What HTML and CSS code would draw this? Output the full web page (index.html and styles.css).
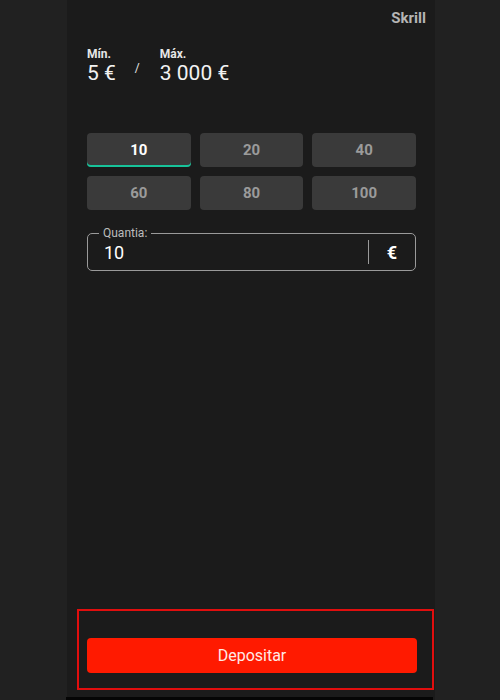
FILE: index.html
```html
<!DOCTYPE html>
<html lang="pt">
<head>
  <meta charset="UTF-8">
  <meta name="viewport" content="width=device-width, initial-scale=1.0">
  <title>Depositar - Skrill</title>
  <link rel="stylesheet" href="styles.css">
</head>
<body>
  <main class="panel">
    <div class="method">Skrill</div>

    <div class="limits">
      <div class="limit">
        <span class="limit-label">Mín.</span>
        <span class="limit-value">5 €</span>
      </div>
      <span class="limit-sep">/</span>
      <div class="limit">
        <span class="limit-label">Máx.</span>
        <span class="limit-value">3 000 €</span>
      </div>
    </div>

    <div class="amounts">
      <button class="amount active">10</button>
      <button class="amount">20</button>
      <button class="amount">40</button>
      <button class="amount">60</button>
      <button class="amount">80</button>
      <button class="amount">100</button>
    </div>

    <div class="field">
      <label class="field-label" for="amountInput">Quantia:</label>
      <input type="text" id="amountInput" class="field-input" value="10">
      <span class="field-divider"></span>
      <span class="field-currency">€</span>
    </div>

    <div class="actions">
      <button class="deposit">Depositar</button>
    </div>

    <div class="panel-edge"></div>
  </main>
</body>
</html>
```

FILE: styles.css
```css
body {
  margin: 0;
  background: #212121;
  font-family: Roboto, "Liberation Sans", Arial, sans-serif;
  color: #ffffff;
}

.panel {
  box-sizing: border-box;
  width: 368px;
  height: 700px;
  margin-left: 67px;
  padding: 0 19px 0 20px;
  background: #1b1b1b;
  display: flex;
  flex-direction: column;
}

.method {
  align-self: flex-end;
  margin-top: 9px;
  margin-right: -10px;
  font-size: 15px;
  line-height: 18px;
  font-weight: 700;
  color: #b5b5b5;
}

.limits {
  display: flex;
  align-items: flex-start;
  margin-top: 20px;
}

.limit {
  display: flex;
  flex-direction: column;
}

.limit-label {
  font-size: 12px;
  line-height: 14px;
  font-weight: 700;
  color: #e6e6e6;
}

.limit-value {
  font-size: 21px;
  line-height: 24px;
  color: #f2f2f2;
}

.limit-sep {
  margin: 14px 20px 0 19px;
  font-size: 12px;
  line-height: 14px;
  color: #e6e6e6;
}

.amounts {
  display: grid;
  grid-template-columns: repeat(3, 1fr);
  gap: 9px;
  margin-top: 48px;
}

.amount {
  height: 34px;
  border: none;
  border-radius: 4px;
  background: #3a3a3a;
  color: #9b9b9b;
  font-family: inherit;
  font-size: 15px;
  font-weight: 700;
  cursor: pointer;
}

.amount.active {
  color: #ffffff;
  box-shadow: inset 0 -2px 0 #17c39a;
}

.field {
  position: relative;
  display: flex;
  align-items: center;
  box-sizing: border-box;
  height: 38px;
  margin-top: 23px;
  padding: 0 18px 0 16px;
  border: 1px solid #9a9a9a;
  border-radius: 5px;
}

.field-label {
  position: absolute;
  top: -8px;
  left: 11px;
  padding: 0 4px;
  background: #1b1b1b;
  font-size: 12px;
  line-height: 14px;
  color: #bdbdbd;
}

.field-input {
  flex: 1;
  min-width: 0;
  margin-top: 1px;
  padding: 0;
  border: none;
  background: transparent;
  color: #ffffff;
  font-family: inherit;
  font-size: 18px;
  outline: none;
}

.field-divider {
  width: 1px;
  height: 24px;
  background: #9a9a9a;
}

.field-currency {
  margin-left: 18px;
  font-size: 18px;
  font-weight: 700;
}

.actions {
  margin: auto -18px 0 -10px;
  padding: 27px 15px 15px 8px;
  border: 2px solid #e10e0e;
}

.deposit {
  display: block;
  width: 100%;
  height: 35px;
  border: none;
  border-radius: 4px;
  background: #ff1a00;
  color: #ffe9e6;
  font-family: inherit;
  font-size: 16px;
  font-weight: 400;
  cursor: pointer;
}

.panel-edge {
  height: 3px;
  margin: 7px -17px 0 -21px;
  background: #050505;
}
```
